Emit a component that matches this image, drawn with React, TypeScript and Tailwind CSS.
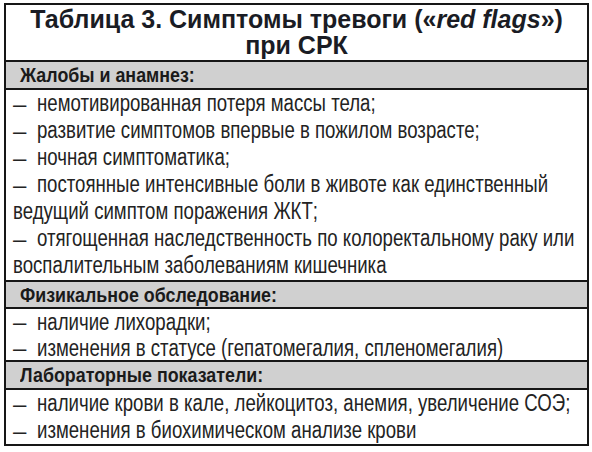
const sections = [
  {
    title: "Жалобы и анамнез:",
    items: [
      ["немотивированная потеря массы тела;"],
      ["развитие симптомов впервые в пожилом возрасте;"],
      ["ночная симптоматика;"],
      ["постоянные интенсивные боли в животе как единственный", "ведущий симптом поражения ЖКТ;"],
      ["отягощенная наследственность по колоректальному раку или", "воспалительным заболеваниям кишечника"],
    ],
    head: "h-[30px]",
    box: "h-[190px] leading-[27px]",
  },
  {
    title: "Физикальное обследование:",
    items: [["наличие лихорадки;"], ["изменения в статусе (гепатомегалия, спленомегалия)"]],
    head: "h-[29px]",
    box: "h-[51px] leading-[26px]",
  },
  {
    title: "Лабораторные показатели:",
    items: [["наличие крови в кале, лейкоцитоз, анемия, увеличение СОЭ;"], ["изменения в биохимическом анализе крови"]],
    head: "h-[30px]",
    box: "h-[54px] leading-[27px]",
  },
];

export default function App() {
  return (
    <div className="w-[592px] h-[452px] bg-white pt-[3px] pl-[4px] font-['Liberation_Sans',Arial,sans-serif]">
      <div className="w-[585px] border-2 border-[#161616] text-[#232323]">
        {/* Title */}
        <div className="h-[55px] pt-[1px] flex flex-col items-center font-bold text-[25px] leading-[26px] text-[#1a1c24]">
          <div>
            Таблица 3. Симптомы тревоги («<span className="italic">red flags</span>»)
          </div>
          <div>при СРК</div>
        </div>

        {sections.map((s) => (
          <div key={s.title}>
            <div className={`${s.head} border-y-2 border-[#161616] bg-[#d0d0d0] pl-[14px] flex items-center font-bold text-[21px] text-[#1a1a1a]`}>
              <span className="inline-block origin-left scale-x-[0.85] whitespace-nowrap">{s.title}</span>
            </div>
            <div className={`${s.box} pl-[7px] text-[23px] overflow-hidden`}>
              {s.items.map((lines, i) =>
                lines.map((l, j) => (
                  <div key={`${i}-${j}`} className="flex whitespace-nowrap">
                    {j === 0 && <span className="w-[24px] shrink-0 text-[24px]">–</span>}
                    <span className="inline-block origin-left scale-x-[0.81]">{l}</span>
                  </div>
                ))
              )}
            </div>
          </div>
        ))}
      </div>
    </div>
  );
}
